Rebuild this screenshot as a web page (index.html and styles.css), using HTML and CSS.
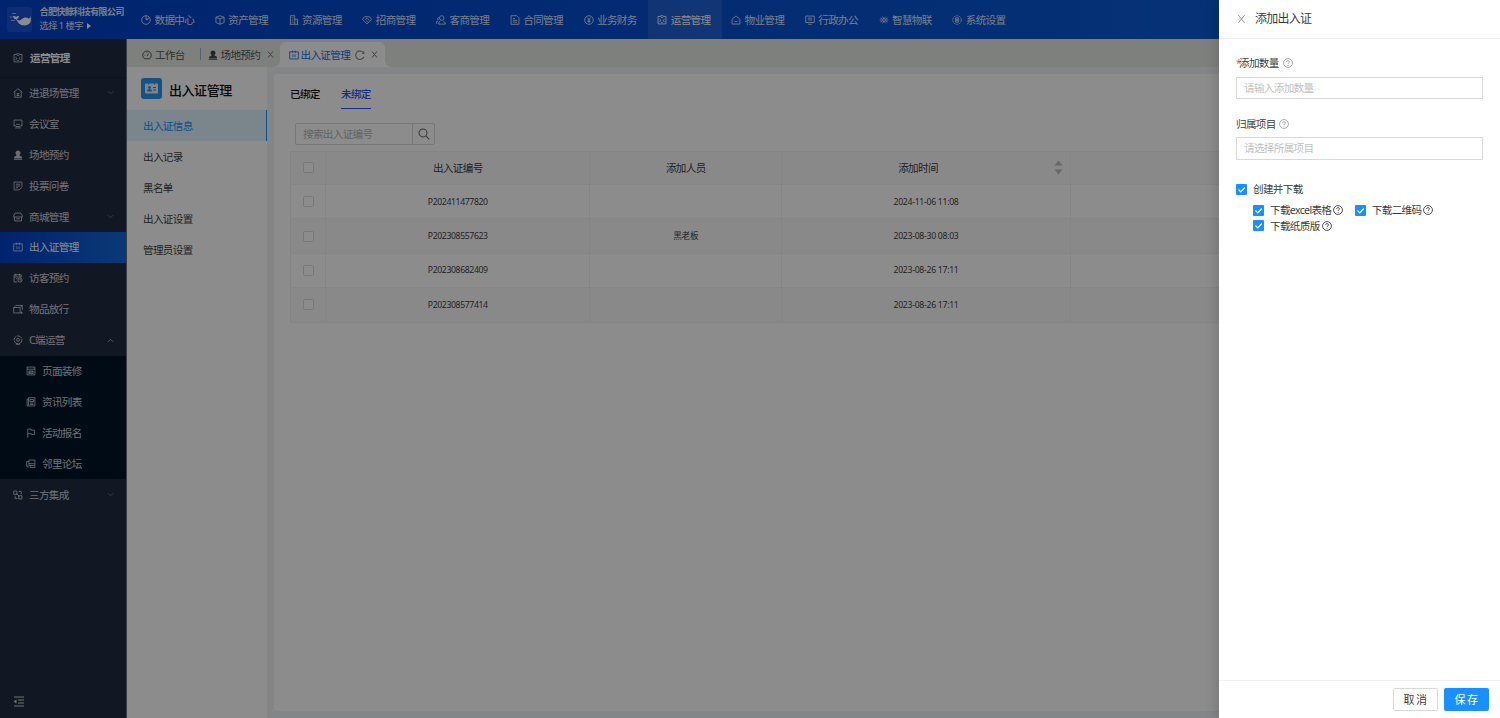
FILE: index.html
```html
<!DOCTYPE html>
<html lang="zh-CN">
<head>
<meta charset="utf-8">
<title>出入证管理</title>
<link rel="stylesheet" href="styles.css">
</head>
<body>
<svg class="defs" xmlns="http://www.w3.org/2000/svg">
  <symbol id="clock" viewBox="0 0 14 14"><circle cx="7" cy="7" r="6"/><path d="M7 1v5.500L11.500 4M7 6.500h3"/></symbol>
  <symbol id="box" viewBox="0 0 14 14"><path d="M7 1 12.700 3.200V10.500L7 13 1.300 10.500V3.200ZM1.300 3.200 7 5.500l5.700-2.300M7 5.500V13"/></symbol>
  <symbol id="building" viewBox="0 0 14 14"><path d="M1 13h12M2 13V1h6v12M8 6h4v7M4 4h2M4 7h2M4 10h2M10 9v1"/></symbol>
  <symbol id="tag" viewBox="0 0 14 14"><path d="M3.500 2.500h7L13.300 6 7 12.500.700 6ZM4.500 6.500 7 4.500l3 3M6 8l2 1.500"/></symbol>
  <symbol id="guest" viewBox="0 0 14 14"><circle cx="8" cy="4.200" r="3.200"/><path d="M4 12.800h9v-2L10 8.500M6 8.500 4 10v2.800M4 3.500 2 5l1.500 2M1 12.500V9l2-1"/></symbol>
  <symbol id="doc" viewBox="0 0 14 14"><path d="M1.500 1H9.500L12.500 4V13H1.500ZM4 5h3M4 7.500h6M4 10h6"/></symbol>
  <symbol id="yen" viewBox="0 0 14 14"><circle cx="7" cy="7" r="6"/><path d="M4.800 3.500 7 6.500l2.200-3M7 6.500V11M5 7h4M5 9h4"/></symbol>
  <symbol id="ops" viewBox="0 0 14 14"><path d="M5 2H1.500v10.500h11V2H9M5 2l2 2 2-2M3.500 6l2 1.500-2 2.500M10.500 6l-2 1.500 2 2.500M6 10.500h2M5 1h4"/></symbol>
  <symbol id="house" viewBox="0 0 14 14"><path d="M1.500 6 7 1.300 12.500 6v6.700h-11ZM4.500 8c1 2 4 2 5 0"/></symbol>
  <symbol id="screen" viewBox="0 0 14 14"><path d="M1 1.500h12v9H1ZM4.500 13h5M4 4.500h6M4 7h6"/></symbol>
  <symbol id="iot" viewBox="0 0 14 14"><circle cx="7" cy="7" r="2"/><path d="M4.500 2.500 7 5l2.500-2.500M4.500 11.500 7 9l2.500 2.500M1 7h3M10 7h3M2 4l2.500 1.500M12 4 9.500 5.500M2 10l2.500-1.500M12 10 9.500 8.500"/></symbol>
  <symbol id="gear" viewBox="0 0 14 14"><circle cx="7" cy="7" r="6" stroke-dasharray="2.700 1.100"/><path d="M5 4h4v6H5Z"/><circle cx="7" cy="7" r="1"/></symbol>
  <symbol id="home" viewBox="0 0 14 14"><path d="M.8 6 7 1l6.200 5M2.500 5.500V13h9V5.500M5 8h4M5 10.500h4M7 7v4"/></symbol>
  <symbol id="meeting" viewBox="0 0 14 14"><path d="M1.500 9.500V1.500h11v8M1 9.500h3M10 9.500h3M4.500 7.500h5M4 10.500h6M3 12.500h8"/></symbol>
  <symbol id="person" viewBox="0 0 14 14"><path class="solid" d="M7 .7a3.500 3.500 0 0 1 2 6.400L9.500 8l3 1.500V12h-11V9.500l3-1.500.5-.9A3.500 3.500 0 0 1 7 .7ZM1 12.500h12v1H1Z"/></symbol>
  <symbol id="vote" viewBox="0 0 14 14"><path d="M12.500 8V1.500h-11v11H8M4 4.500h6M4 7h6M4 9.500h3M8.500 12.500l4-3.500"/></symbol>
  <symbol id="shop" viewBox="0 0 14 14"><path d="M3 1.500h8L13 5v2H1V5ZM2 7v5.500h10V7M4.500 9.500h5"/></symbol>
  <symbol id="card" viewBox="0 0 14 14"><path d="M1 2.500h12v10H1ZM5 1v3M9 1v3M5.500 6v4M8.500 6v4"/></symbol>
  <symbol id="visit" viewBox="0 0 14 14"><path d="M6 12.500H1.500v-10h10V6M1.500 5.500h10M4 1v3M9 1v3M4 8h2"/><circle cx="9.800" cy="9.800" r="3"/><path d="M9.800 8v2H11"/></symbol>
  <symbol id="goods" viewBox="0 0 14 14"><path d="M1 5h9v7.500H1ZM1 5l3-3h9l-3 3M13 2v6M10 12.500h3.500M12 10.500v3"/></symbol>
  <symbol id="target" viewBox="0 0 14 14"><circle cx="7" cy="6.800" r="5.500" stroke-dasharray="7 1"/><circle cx="7" cy="6.800" r="2"/><path d="M4 13h6"/></symbol>
  <symbol id="page" viewBox="0 0 14 14"><path d="M1.500 1.500h11v11h-11ZM1.500 4.500h11M4 7h6v3.500H4ZM4 9l6-1"/></symbol>
  <symbol id="news" viewBox="0 0 14 14"><path d="M3.500 1h9v11.500H1.500V3h2ZM5.500 3.500h5v3h-5ZM5.500 8.500h5M5.500 10.500h5M3.500 3v9"/></symbol>
  <symbol id="flag" viewBox="0 0 14 14"><path d="M2.500 13.500V1.500H7V3h5v6H7.500V8h-5"/></symbol>
  <symbol id="forum" viewBox="0 0 14 14"><path d="M4 1.500h8.500V9H4ZM3.500 3.500H1V10h2v2M6 9v3h6.500V10M4 6.500h8"/></symbol>
  <symbol id="link" viewBox="0 0 14 14"><path d="M1 1.500h4.500V6H1ZM8 8h4.500v4.500H8ZM8 2h3.500v4M3 8v4h3M5 5l4 4"/></symbol>
  <symbol id="dash" viewBox="0 0 14 14"><path d="M3.500 12.300a6 6 0 1 1 7 0ZM7 8.500 9.500 5M3.500 7.500h1M7 3v1"/></symbol>
  <symbol id="down" viewBox="0 0 14 14"><path d="M2 4.500 7 9.500 12 4.500"/></symbol>
  <symbol id="up" viewBox="0 0 14 14"><path d="M2 9.500 7 4.500 12 9.500"/></symbol>
  <symbol id="x" viewBox="0 0 14 14"><path d="M2 1 12 13M12 1 2 13"/></symbol>
  <symbol id="reload" viewBox="0 0 14 14"><path d="M12 4A6 6 0 1 0 12.500 9.500M12.300 2v2.800H10"/></symbol>
  <symbol id="search" viewBox="0 0 14 14"><circle cx="5.800" cy="5.800" r="4.600"/><path d="m9.200 9.200 4 4"/></symbol>
  <symbol id="help" viewBox="0 0 14 14"><circle cx="7" cy="7" r="6.200"/><path d="M5 5.600C5 3 9 3 9 5.500 9 7 7 6.800 7 8.500M7 9.800v1.200"/></symbol>
</svg>
<div class="app">
  <header class="top">
    <div class="brand">
      <svg class="logo" viewBox="0 0 25 25"><path class="whale" d="M9 11.500c2 2.500 4 2.500 6 .5 2-1.800 5-2 6.500-.5 1.200-.3 1.700-1 1.500-2.500 1.500 2.500 1 6-.5 7.500-2.500 2.500-8 2.500-10.500 0-1.500-1.500-2.300-3-3-5Z"/><path class="whale" d="M9.500 12.500C7 12 6 10.500 6 9c1.500 0 2.500.3 3 1 .7-.8 2-1.200 3-1-.2 1.500-1 2.500-2.500 3.500Z"/><path class="wave" d="M5 6.500h4M2.500 10h3M4 13.500h4"/></svg>
      <div class="brand-text">
        <div class="company">合肥快鲸科技有限公司</div>
        <div class="pick">选择 1 楼宇<span class="tri"></span></div>
      </div>
    </div>
    <nav class="nav">
      <a class="nav-item"><svg class="ic"><use href="#clock"/></svg>数据中心</a>
      <a class="nav-item"><svg class="ic"><use href="#box"/></svg>资产管理</a>
      <a class="nav-item"><svg class="ic"><use href="#building"/></svg>资源管理</a>
      <a class="nav-item"><svg class="ic"><use href="#tag"/></svg>招商管理</a>
      <a class="nav-item"><svg class="ic"><use href="#guest"/></svg>客商管理</a>
      <a class="nav-item"><svg class="ic"><use href="#doc"/></svg>合同管理</a>
      <a class="nav-item"><svg class="ic"><use href="#yen"/></svg>业务财务</a>
      <a class="nav-item on"><svg class="ic"><use href="#ops"/></svg>运营管理</a>
      <a class="nav-item"><svg class="ic"><use href="#house"/></svg>物业管理</a>
      <a class="nav-item"><svg class="ic"><use href="#screen"/></svg>行政办公</a>
      <a class="nav-item"><svg class="ic"><use href="#iot"/></svg>智慧物联</a>
      <a class="nav-item"><svg class="ic"><use href="#gear"/></svg>系统设置</a>
    </nav>
  </header>
  <div class="body">
    <aside class="side">
      <div class="side-title"><svg class="ic"><use href="#ops"/></svg>运营管理</div>
      <a class="item"><svg class="ic"><use href="#home"/></svg>进退场管理<svg class="arrow"><use href="#down"/></svg></a>
      <a class="item"><svg class="ic"><use href="#meeting"/></svg>会议室</a>
      <a class="item"><svg class="ic"><use href="#person"/></svg>场地预约</a>
      <a class="item"><svg class="ic"><use href="#vote"/></svg>投票问卷</a>
      <a class="item"><svg class="ic"><use href="#shop"/></svg>商城管理<svg class="arrow"><use href="#down"/></svg></a>
      <a class="item on"><svg class="ic"><use href="#card"/></svg>出入证管理</a>
      <a class="item"><svg class="ic"><use href="#visit"/></svg>访客预约</a>
      <a class="item"><svg class="ic"><use href="#goods"/></svg>物品放行</a>
      <a class="item"><svg class="ic"><use href="#target"/></svg>C端运营<svg class="arrow open"><use href="#up"/></svg></a>
      <div class="sub">
        <a class="item"><svg class="ic"><use href="#page"/></svg>页面装修</a>
        <a class="item"><svg class="ic"><use href="#news"/></svg>资讯列表</a>
        <a class="item"><svg class="ic"><use href="#flag"/></svg>活动报名</a>
        <a class="item"><svg class="ic"><use href="#forum"/></svg>邻里论坛</a>
      </div>
      <a class="item"><svg class="ic"><use href="#link"/></svg>三方集成<svg class="arrow"><use href="#down"/></svg></a>
      <svg class="fold" viewBox="0 0 12 11"><path d="M1 1h10M5 4h6M5 7h6M1 10h10"/><path class="solid" d="M.5 5.500 3.500 3.500v4Z"/></svg>
    </aside>
    <main class="main">
      <div class="tabs">
        <div class="tab first"><svg class="ic"><use href="#dash"/></svg>工作台</div>
        <div class="tab second"><svg class="ic dark"><use href="#person"/></svg>场地预约<svg class="close"><use href="#x"/></svg></div>
        <div class="tab on"><svg class="ic"><use href="#card"/></svg>出入证管理<svg class="reload"><use href="#reload"/></svg><svg class="close"><use href="#x"/></svg></div>
      </div>
      <div class="content">
        <section class="panel">
          <h1 class="panel-title"><svg class="badge" viewBox="0 0 21 21"><rect class="plate" x="4" y="5.500" width="13" height="10" rx="1"/><path class="mark" d="M7.500 4.500v2M13.500 4.500v2M12 9.500h3M12 12h3"/><circle class="dot" cx="8.500" cy="9.500" r="1.400"/><path class="dot" d="M6 13.500c0-3.200 5-3.200 5 0Z"/></svg>出入证管理</h1>
          <a class="link on">出入证信息</a>
          <a class="link">出入记录</a>
          <a class="link">黑名单</a>
          <a class="link">出入证设置</a>
          <a class="link">管理员设置</a>
        </section>
        <section class="card">
          <div class="switch"><span class="sw">已绑定</span><span class="sw on">未绑定</span></div>
          <div class="search"><span class="query">搜索出入证编号</span><span class="go"><svg><use href="#search"/></svg></span></div>
          <div class="table">
            <div class="row head"><div class="cell"><i class="cb"></i></div><div class="cell">出入证编号</div><div class="cell">添加人员</div><div class="cell sortable"><span>添加时间</span><svg class="sorter" viewBox="0 0 9 15"><path d="M.5 5.500 4.500.5l4 5ZM.5 9.500l4 5 4-5Z"/></svg></div><div class="cell"></div></div>
            <div class="row"><div class="cell"><i class="cb"></i></div><div class="cell">P202411477820</div><div class="cell"></div><div class="cell date">2024-11-06 11:08</div><div class="cell"></div></div>
            <div class="row even"><div class="cell"><i class="cb"></i></div><div class="cell">P202308557623</div><div class="cell">黑老板</div><div class="cell date">2023-08-30 08:03</div><div class="cell"></div></div>
            <div class="row"><div class="cell"><i class="cb"></i></div><div class="cell">P202308682409</div><div class="cell"></div><div class="cell date">2023-08-26 17:11</div><div class="cell"></div></div>
            <div class="row even"><div class="cell"><i class="cb"></i></div><div class="cell">P202308577414</div><div class="cell"></div><div class="cell date">2023-08-26 17:11</div><div class="cell"></div></div>
          </div>
        </section>
      </div>
    </main>
  </div>
</div>
<div class="mask"></div>
<div class="drawer">
  <div class="drawer-head"><svg class="x"><use href="#x"/></svg>添加出入证</div>
  <div class="form">
    <div class="label"><b class="req">*</b>添加数量<svg class="help light"><use href="#help"/></svg></div>
    <div class="input">请输入添加数量</div>
    <div class="label next">归属项目<svg class="help light"><use href="#help"/></svg></div>
    <div class="input">请选择所属项目</div>
    <div class="check parent"><svg class="tick" viewBox="0 0 11 11"><path d="m2.500 5.500 2.300 2.300L8.800 3.500"/></svg>创建并下载</div>
    <div class="options">
      <div class="check"><svg class="tick" viewBox="0 0 11 11"><path d="m2.500 5.500 2.300 2.300L8.800 3.500"/></svg>下载excel表格<svg class="help"><use href="#help"/></svg></div>
      <div class="check"><svg class="tick" viewBox="0 0 11 11"><path d="m2.500 5.500 2.300 2.300L8.800 3.500"/></svg>下载二维码<svg class="help"><use href="#help"/></svg></div>
      <div class="check"><svg class="tick" viewBox="0 0 11 11"><path d="m2.500 5.500 2.300 2.300L8.800 3.500"/></svg>下载纸质版<svg class="help"><use href="#help"/></svg></div>
    </div>
  </div>
  <div class="drawer-foot"><span class="btn">取消</span><span class="btn primary">保存</span></div>
</div>
</body>
</html>
```

FILE: styles.css
```css
* { box-sizing: border-box; }
body {
  margin: 0;
  width: 1500px;
  height: 718px;
  overflow: hidden;
  position: relative;
  font-family: "Noto Sans", "Noto Sans CJK SC", sans-serif;
  font-size: 10.6px;
  letter-spacing: -0.67px;
  line-height: 16px;
  color: rgba(0, 0, 0, 0.8);
}
svg { display: block; flex: none; fill: none; stroke: currentColor; stroke-width: 1.2; }
.defs { position: absolute; width: 0; height: 0; }
.solid { fill: currentColor; stroke: none; }
.ic { width: 10px; height: 10px; }
.app { display: flex; flex-direction: column; height: 718px; }

.top { display: flex; height: 39px; background: linear-gradient(90deg, #0042c8, #0e60dc); color: rgba(255, 255, 255, 0.88); }
.brand { display: flex; width: 132px; padding: 7px 0 0 7px; gap: 7.5px; }
.logo { width: 25px; height: 25px; background: #1e50d6; border-radius: 3px; }
.whale { fill: #fff; stroke: none; }
.wave { stroke: #b9cdf8; stroke-width: 0.8; }
.brand-text { white-space: nowrap; }
.company { font-size: 9.2px; letter-spacing: -0.78px; font-weight: 700; line-height: 12px; margin-top: -1px; }
.pick { display: flex; align-items: center; font-size: 9.3px; letter-spacing: -0.55px; line-height: 14px; margin-top: 1px; }
.tri { border-left: 4px solid #fff; border-top: 3px solid transparent; border-bottom: 3px solid transparent; margin-left: 4px; }
.nav { display: flex; }
.nav-item { display: flex; align-items: center; gap: 3.5px; width: 73.75px; padding-left: 9px; white-space: nowrap; }
.nav-item.on { background: rgba(255, 255, 255, 0.1); color: #fff; }

.body { display: flex; flex: 1; min-height: 0; }
.side { display: flex; flex-direction: column; width: 127px; background: #222a42; border-right: 1px solid #6a7080; color: rgba(255, 255, 255, 0.8); }
.side-title { display: flex; align-items: center; height: 38.5px; padding-left: 13px; gap: 7px; font-weight: 700; color: #fff; border-bottom: 1px solid #1d243a; }
.side .ic { color: rgba(255, 255, 255, 0.75); }
.item { display: flex; align-items: center; height: 30.92px; padding: 0 12px 0 13px; gap: 6px; white-space: nowrap; }
.side > .item.on { background: linear-gradient(90deg, #0040c8, #1468d8); color: #fff; }
.arrow { width: 7px; height: 7px; margin-left: auto; opacity: 0.45; stroke-width: 1.8; }
.arrow.open { opacity: 0.8; }
.sub { background: #001529; }
.sub .item { padding-left: 26px; }
.fold { width: 12px; height: 11px; margin: auto 0 11.5px 13px; stroke-width: 1.2; }

.main { flex: 1; min-width: 0; display: flex; flex-direction: column; background: #f0f2f5; }
.tabs { display: flex; height: 28px; padding-top: 3px; background: #e6e9e6; color: rgba(0, 0, 0, 0.7); white-space: nowrap; }
.tab { display: flex; align-items: center; }
.tab.first { width: 74px; padding-left: 15px; gap: 3px; position: relative; }
.tab.first::after { content: ""; position: absolute; right: 0; top: 6px; height: 12px; width: 1px; background: #8fb4dc; }
.tab.second { width: 79px; padding-left: 6.5px; gap: 3px; }
.dark { color: #444; }
.tab.on { width: 105px; padding-left: 8.5px; gap: 2px; background: #fff; color: #1070e8; border-radius: 6px 6px 0 0; position: relative; }
.tab.on::before, .tab.on::after { content: ""; position: absolute; bottom: 0; width: 6px; height: 6px; }
.tab.on::before { left: -6px; background: radial-gradient(circle at 0 0, transparent 5.5px, #fff 6px); }
.tab.on::after { right: -6px; background: radial-gradient(circle at 100% 0, transparent 5.5px, #fff 6px); }
.close { width: 7px; height: 7px; color: #777; margin-left: 4px; stroke-width: 2; }
.reload { width: 10px; height: 10px; color: #888; margin-left: 2.5px; stroke-width: 1.5; }

.content { display: flex; flex: 1; min-height: 0; }
.panel { width: 140px; background: #fff; }
.panel-title { display: flex; align-items: center; gap: 7px; height: 43px; margin: 0; padding: 2px 0 0 14px; font-size: 13px; font-weight: 500; letter-spacing: -0.45px; color: #111; }
.badge { width: 21px; height: 21px; border-radius: 3px; background: #2b93ee; margin-top: -2px; }
.plate { fill: #e4f1fd; stroke: none; }
.mark { stroke: #2b93ee; }
.dot { fill: #2b93ee; stroke: none; }
.link { display: flex; align-items: center; height: 31px; padding-left: 16px; }
.link.on { color: #1890ff; background: #dff3ff; border-right: 1.5px solid #1890ff; }
.card { flex: 1; min-width: 0; margin: 7px 0 7px 7px; padding: 8px 0 0 16px; background: #fff; border-radius: 3px; overflow: hidden; }
.switch { display: flex; gap: 21px; height: 26.5px; font-weight: 500; color: #111; }
.sw { height: 27px; padding-top: 4px; width: 30px; white-space: nowrap; }
.sw.on { color: #2f54eb; border-bottom: 1.5px solid #2f54eb; }
.search { display: flex; width: 140px; height: 22.5px; margin: 14px 0 5.5px 5px; border: 1px solid #d9d9d9; border-radius: 2px; color: #b5b5b5; align-items: center; }
.query { flex: 1; padding-left: 7px; }
.go { width: 22px; height: 100%; display: flex; align-items: center; justify-content: center; border-left: 1px solid #d9d9d9; color: #666; }
.go svg { width: 12px; height: 12px; }
.table { border-left: 1px solid #f0f0f0; border-top: 1px solid #f0f0f0; }
.row { display: grid; grid-template-columns: 34.5px 264.5px 191.5px 289px 1fr; height: 34.45px; font-size: 8.7px; letter-spacing: -0.38px; }
.row.head { background: #fafafa; height: 33.4px; font-size: 10.6px; letter-spacing: -0.67px; }
.row.even { background: #fafafa; }
.cell { display: flex; align-items: center; justify-content: center; border-right: 1px solid #f2f2f2; border-bottom: 1px solid #f2f2f2; padding-left: 1px; }
.date { letter-spacing: -0.3px; }
.sortable { padding: 0 7px 0 1px; }
.sortable span { flex: 1; text-align: center; }
.sorter { width: 9px; height: 15px; }
.sorter path { fill: #bfbfbf; stroke: none; }
.cb { width: 11px; height: 11px; border: 1px solid #d9d9d9; border-radius: 1.5px; background: #fff; }

.mask { position: absolute; inset: 0; background: rgba(0, 0, 0, 0.45); }
.drawer { position: absolute; top: 0; right: 0; width: 281.5px; height: 718px; display: flex; flex-direction: column; background: #fff; box-shadow: -4px 0 10px rgba(0, 0, 0, 0.12); }
.drawer-head { display: flex; align-items: center; height: 39px; padding-left: 18.5px; gap: 9px; font-size: 12px; letter-spacing: -0.75px; border-bottom: 1px solid #f0f0f0; }
.x { width: 9px; height: 10px; color: #888; stroke-width: 1.4; }
.form { flex: 1; padding: 16px 17px 0 17.5px; }
.label { display: flex; align-items: center; height: 16px; margin-bottom: 5.5px; }
.label.next { margin-top: 16.5px; }
.label.next .help { margin-left: 3px; }
.req { color: #ff4d4f; font-weight: 400; width: 3px; }
.help { width: 10px; height: 10px; margin-left: 2px; }
.light { color: #999; margin-left: 4px; }
.input { height: 22.5px; padding: 2px 7px; border: 1px solid #d9d9d9; color: #bfbfbf; }
.check { display: flex; align-items: center; height: 15.5px; white-space: nowrap; }
.parent { margin-top: 22px; }
.tick { width: 11px; height: 11px; margin-right: 6px; background: #1890ff; border-radius: 1px; stroke: #fff; }
.options { display: flex; flex-wrap: wrap; column-gap: 11.5px; padding: 5.5px 0 0 17px; }
.drawer-foot { display: flex; justify-content: flex-end; height: 38px; padding: 7px 11px 0; gap: 6px; border-top: 1px solid #f0f0f0; }
.btn { width: 45px; height: 23px; border: 1px solid #d9d9d9; border-radius: 1.5px; text-align: center; font-size: 11px; letter-spacing: 1.5px; line-height: 21px; padding-left: 1px; }
.primary { background: #1890ff; border-color: #1890ff; color: #fff; }
```
